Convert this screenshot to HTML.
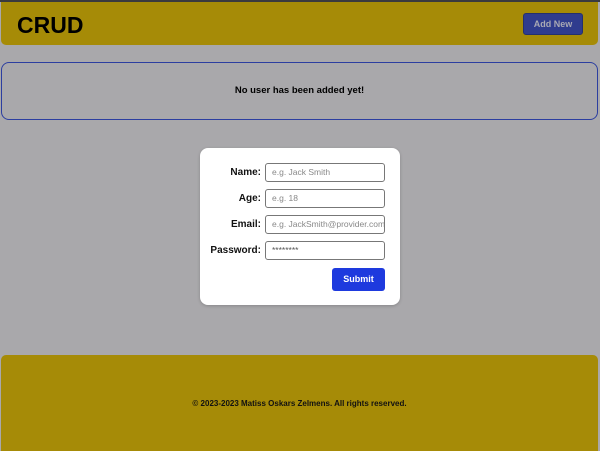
<!DOCTYPE html>
<html><head><style>
*{margin:0;padding:0;box-sizing:border-box}
body{width:600px;height:451px;background:#a9a8ab;font-family:"Liberation Sans",sans-serif;position:relative;overflow:hidden}
.top{position:absolute;left:0;top:0;width:600px;height:2px;background:#3a3a3e}
.hdr{position:absolute;left:1px;top:2px;width:597px;height:43px;background:#a68b07;border-radius:0 0 5px 5px}
.hdr h1{position:absolute;left:16px;top:10px;font-size:23px;font-weight:bold;color:#000}
.add{position:absolute;left:522px;top:11px;width:60px;height:22px;background:#2f3c8e;border:1px solid #24306e;border-radius:3px;color:#a9a9b4;font-size:9px;font-weight:bold;text-align:center;line-height:20px}
.msg{position:absolute;left:1px;top:62px;width:597px;height:58px;border:1.5px solid #2c3ea0;border-radius:8px;text-align:center;line-height:56px;font-size:9.5px;font-weight:bold;color:#000}
.card{position:absolute;left:200px;top:148px;width:200px;height:157px;background:#fff;border-radius:8px;box-shadow:0 1px 3px rgba(0,0,0,.2)}
.row{position:absolute;left:0;width:200px;height:19px}
.row label{position:absolute;right:139px;top:4px;font-size:10px;font-weight:bold;color:#111}
.row .in{position:absolute;left:65px;top:0;width:120px;height:19px;border:1px solid #777;border-radius:3px;font-size:8.5px;color:#888;padding-left:6px;line-height:17px;white-space:nowrap;overflow:hidden}
.sub{position:absolute;left:132px;top:120px;width:53px;height:23px;background:#1e3ade;border-radius:3px;color:#fff;font-size:9px;font-weight:bold;text-align:center;line-height:23px}
.ftr{position:absolute;left:1px;top:355px;width:597px;height:96px;background:#a68b07;border-radius:5px 5px 0 0;text-align:center;font-size:8px;font-weight:bold;color:#111;padding-top:44px}
</style></head><body>
<div class="top"></div>
<div class="hdr"><h1>CRUD</h1><div class="add">Add New</div></div>
<div class="msg">No user has been added yet!</div>
<div class="card">
<div class="row" style="top:15px"><label>Name:</label><div class="in">e.g. Jack Smith</div></div>
<div class="row" style="top:41px"><label>Age:</label><div class="in">e.g. 18</div></div>
<div class="row" style="top:67px"><label>Email:</label><div class="in">e.g. JackSmith@provider.com</div></div>
<div class="row" style="top:93px"><label>Password:</label><div class="in" style="color:#555">********</div></div>
<div class="sub">Submit</div>
</div>
<div class="ftr">© 2023-2023 Matiss Oskars Zelmens. All rights reserved.</div>
</body></html>
